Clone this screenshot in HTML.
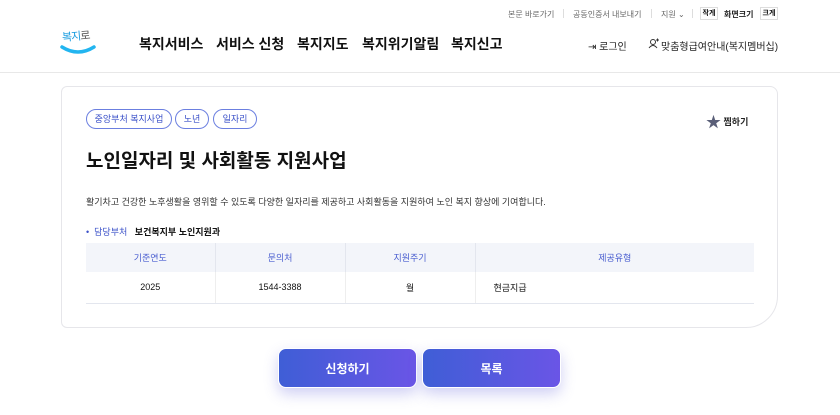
<!DOCTYPE html>
<html><head><meta charset="utf-8"><style>
*{margin:0;padding:0;box-sizing:border-box}
body{width:840px;height:415px;background:#fff;font-family:"Liberation Sans","Noto Sans CJK KR",sans-serif;color:#111;position:relative;overflow:hidden}
.a{position:absolute;white-space:nowrap}
.util{top:9px;font-size:8px;color:#666}
.nav{top:34px;font-size:14px;font-weight:700;color:#111}
.tag{position:absolute;top:109px;height:20px;border:1px solid #6b7fe0;border-radius:10px;font-size:9px;color:#3a50c8;line-height:18px;text-align:center}
table{position:absolute;left:86px;top:243px;width:668px;border-collapse:collapse;font-size:9px}
th{background:#f3f5fa;color:#4b5fd0;font-weight:400;height:29px;border-right:1px solid #e3e6ee}
td{height:31px;border-right:1px solid #eee;border-bottom:1px solid #e3e6ee;text-align:center}
th:last-child,td:last-child{border-right:none}
.btn{position:absolute;top:348px;height:40px;border-radius:8px;background:linear-gradient(90deg,#3f5ed6,#6a55e6);color:#fff;font-size:12px;font-weight:700;text-align:center;line-height:40px;box-shadow:0 6px 14px rgba(100,100,220,.3);border:1px solid #fff}
</style></head><body>
<div class="a util" style="left:508px">본문 바로가기</div>
<div class="a" style="left:563px;top:9px;width:1px;height:9px;background:#ddd"></div>
<div class="a util" style="left:573px">공동인증서 내보내기</div>
<div class="a" style="left:651px;top:9px;width:1px;height:9px;background:#ddd"></div>
<div class="a util" style="left:661px">지원 ⌄</div>
<div class="a" style="left:692px;top:9px;width:1px;height:9px;background:#ddd"></div>
<div class="a" style="left:700px;top:7px;width:18px;height:13px;border:1px solid #ddd;font-size:7px;font-weight:700;text-align:center;line-height:11px">작게</div>
<div class="a util" style="left:724px;font-weight:700;color:#222">화면크기</div>
<div class="a" style="left:760px;top:7px;width:18px;height:13px;border:1px solid #ddd;font-size:7px;font-weight:700;text-align:center;line-height:11px">크게</div>

<div class="a" style="left:62px;top:28px;font-size:11px;color:#1a9de0;letter-spacing:-1px;transform:rotate(-5deg)">복지<span style="color:#555">로</span></div>
<svg class="a" style="left:59px;top:44px" width="38" height="14"><path d="M3 3 Q19 13 35 3" stroke="#22b5f0" stroke-width="3.5" fill="none" stroke-linecap="round"/></svg>

<div class="a nav" style="left:139px">복지서비스</div>
<div class="a nav" style="left:216px">서비스 신청</div>
<div class="a nav" style="left:297px">복지지도</div>
<div class="a nav" style="left:362px">복지위기알림</div>
<div class="a nav" style="left:451px">복지신고</div>
<div class="a" style="left:588px;top:38px;font-size:10px;color:#222">⇥ 로그인</div>
<svg class="a" style="left:648px;top:38px" width="11" height="11"><circle cx="5" cy="4" r="2.5" fill="none" stroke="#333"/><path d="M1 10 Q5 5 9 10" fill="none" stroke="#333"/><path d="M8 2h3M9.5 .5v3" stroke="#333"/></svg>
<div class="a" style="left:661px;top:38px;font-size:10px;color:#222">맞춤형급여안내(복지멤버십)</div>
<div class="a" style="left:0;top:72px;width:840px;height:1px;background:#e8e8e8"></div>

<div class="a" style="left:61px;top:86px;width:717px;height:242px;border:1px solid #e6e6ea;border-radius:6px 8px 32px 6px"></div>
<div class="tag" style="left:86px;width:86px">중앙부처 복지사업</div>
<div class="tag" style="left:175px;width:34px">노년</div>
<div class="tag" style="left:213px;width:44px">일자리</div>
<div class="a" style="left:706px;top:111px;font-size:9px;font-weight:700;color:#222"><span style="color:#5a5f78;font-size:15px;vertical-align:-2px">★</span> 찜하기</div>
<div class="a" style="left:86px;top:146px;font-size:19px;font-weight:700">노인일자리 및 사회활동 지원사업</div>
<div class="a" style="left:86px;top:195px;font-size:9px;color:#333">활기차고 건강한 노후생활을 영위할 수 있도록 다양한 일자리를 제공하고 사회활동을 지원하여 노인 복지 향상에 기여합니다.</div>
<div class="a" style="left:86px;top:225px;font-size:9px"><span style="color:#3a50c8">• &nbsp;담당부처</span> &nbsp; <b style="font-weight:700">보건복지부 노인지원과</b></div>
<table>
<tr><th style="width:129px">기준연도</th><th style="width:130px">문의처</th><th style="width:130px">지원주기</th><th>제공유형</th></tr>
<tr><td>2025</td><td>1544-3388</td><td>월</td><td style="text-align:left;padding-left:18px">현금지급</td></tr>
</table>
<div class="btn" style="left:278px;width:139px">신청하기</div>
<div class="btn" style="left:422px;width:139px">목록</div>
</body></html>
